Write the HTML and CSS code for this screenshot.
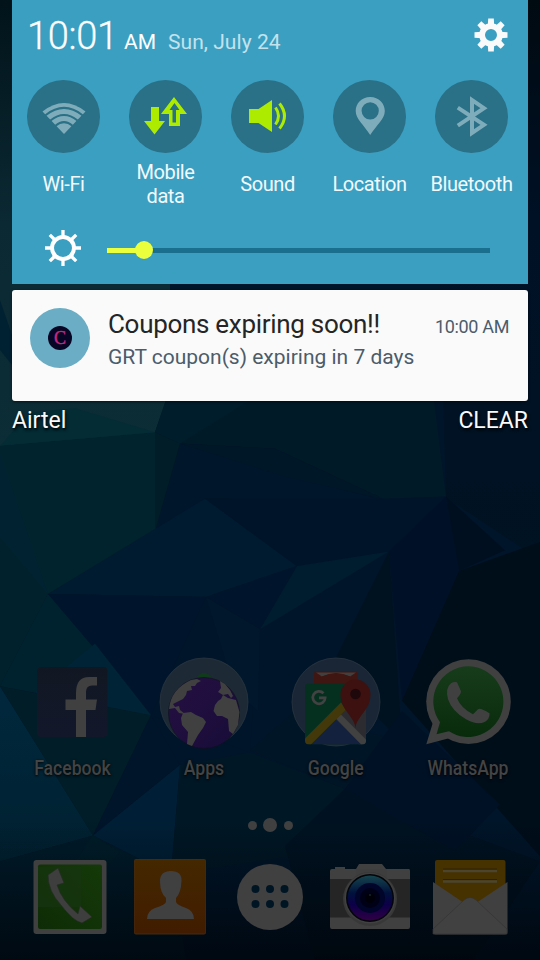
FILE: index.html
```html
<!DOCTYPE html>
<html lang="en">
<head>
<meta charset="utf-8">
<title>Notifications</title>
<link rel="stylesheet" href="styles.css">
</head>
<body>
<div class="phone">
  <svg class="wallpaper" viewBox="0 0 540 960" preserveAspectRatio="none">
    <defs>
      <linearGradient id="lt" x1="0" y1="0" x2="0" y2="1"><stop offset="0" stop-color="#02131a"/><stop offset=".5" stop-color="#0b2933"/><stop offset="1" stop-color="#0b2d36"/></linearGradient>
      <linearGradient id="rt" x1="0" y1="0" x2="0" y2="1"><stop offset="0" stop-color="#000a11"/><stop offset=".4" stop-color="#001126"/><stop offset="1" stop-color="#001322"/></linearGradient>
      <linearGradient id="lb" x1="0" y1="0" x2="0" y2="1"><stop offset="0" stop-color="#00283d"/><stop offset="1" stop-color="#002131"/></linearGradient>
      <linearGradient id="fade" x1="0" y1="0" x2="0" y2="1"><stop offset="0" stop-color="#000409" stop-opacity="0"/><stop offset="1" stop-color="#000409" stop-opacity=".75"/></linearGradient>
    </defs>
    <rect width="540" height="960" fill="#001529"/>
    <path d="M0 0H170V390L155 433L0 446Z" fill="url(#lt)"/>
    <path d="M432 0H540V560L446 498Z" fill="url(#rt)"/>
    <path d="M0 300L12 335V365L0 350Z" fill="#002131"/>
    <g transform="translate(0 -14.8) scale(1 1.037)">
      <path d="M166 400H434L446 493L389 498L275 447L180 442L155 527V431Z" fill="#001a28"/>
      <path d="M166 400H250L180 442L155 431Z" fill="#001d2c"/>
      <path d="M180 442L285 472L389 498L205 495L155 527Z" fill="#00162a"/>
      <path d="M180 442L275 447L385 496L285 474Z" fill="#001728"/>
      <path d="M0 444L155 431V527L48 587L0 587Z" fill="#01232d"/>
      <path d="M0 444L155 431L75 408L30 412Z" fill="#032c35"/>
      <path d="M155 431L180 442L155 527Z" fill="#001d28"/>
      <path d="M0 450L48 587L0 532Z" fill="#012331"/>
      <path d="M0 532L48 587L0 676Z" fill="#01222c"/>
      <path d="M48 587L151 704L0 676Z" fill="#002030"/>
      <path d="M0 676L48 587L95 640L35 682Z" fill="#00222f"/>
      <path d="M48 587L205 495L297 560L206 590Z" fill="#001a2f"/>
      <path d="M205 495H389L446 493L389 546L297 560Z" fill="#001429"/>
      <path d="M48 587L206 590L151 704Z" fill="#00152b"/>
      <path d="M206 590L258 621L250 740L151 704Z" fill="#00152a"/>
      <path d="M206 590L297 560L260 621Z" fill="#00152b"/>
      <path d="M297 560L389 546L260 621Z" fill="#001c2f"/>
      <path d="M206 590L260 621L258 700L235 680Z" fill="#00172c"/>
      <path d="M389 546L402 730L330 660Z" fill="#001220"/>
      <path d="M389 546L446 493L459 565L402 690Z" fill="#001127"/>
      <path d="M459 565L540 537V840L402 690Z" fill="#000e1a"/>
      <path d="M446 493L505 545L459 565Z" fill="#000f20"/>
      <path d="M0 676L93 820L0 845Z" fill="url(#lb)"/>
      <path d="M0 676L151 704L93 820Z" fill="#001d28"/>
      <path d="M35 682L95 635L151 704Z" fill="#002435"/>
      <path d="M151 704L180 752L93 820Z" fill="#00142a"/>
      <path d="M93 820L180 752L171 858Z" fill="#001f36"/>
      <path d="M180 752L250 740L345 775L290 840L171 858Z" fill="#001725"/>
      <path d="M250 738L295 700L402 730L345 775Z" fill="#001526"/>
      <path d="M345 775L540 845L460 960H320L285 830Z" fill="#001221"/>
      <path d="M345 775L455 835L500 790L402 700Z" fill="#001125"/>
      <path d="M0 845L93 820L171 858L190 960H0Z" fill="#001b2a"/>
      <path d="M76 844L93 820L120 836L108 850Z" fill="#001d29"/>
    </g>
    <rect y="820" width="540" height="140" fill="url(#fade)"/>
  </svg>

  <section class="shade">
    <header class="status">
      <span class="clock">10:01</span>
      <span class="ampm">AM</span>
      <span class="date">Sun, July 24</span>
      <svg class="gear" viewBox="-17 -17 34 34">
        <g fill="#fafafa">
          <path id="t" d="M-2.8 -16.5H2.8L3.2 -9H-3.2Z"/>
          <use href="#t" transform="rotate(45)"/><use href="#t" transform="rotate(90)"/><use href="#t" transform="rotate(135)"/><use href="#t" transform="rotate(180)"/><use href="#t" transform="rotate(225)"/><use href="#t" transform="rotate(270)"/><use href="#t" transform="rotate(315)"/>
        </g>
        <circle r="8.9" fill="none" stroke="#fafafa" stroke-width="5.8"/>
      </svg>
    </header>
    <div class="toggles">
      <div class="toggle">
        <svg viewBox="0 0 73 73"><circle cx="36.5" cy="36.5" r="36.5"/><path d="M15.500 31.500Q37 14.500 58.500 31.500L37 54Z" fill="#7facba"/><path d="M18.500 35.200Q37 20.500 55.500 35.200M23.500 40.500Q37 29.500 50.500 40.500M28.500 45.700Q37 38.500 45.500 45.700" fill="none" stroke="#2a7086" stroke-width="2"/></svg>
        <span class="name">Wi-Fi</span>
      </div>
      <div class="toggle">
        <svg viewBox="0 0 73 73"><circle cx="36.500" cy="36.500" r="36.500"/><path d="M22 27H30V41H36L25.500 54.500L15 41H22Z" fill="#adec00"/><path d="M45 17L58 34H51V46H40V34H32Z" fill="#adec00"/><path d="M45.500 23L50.500 30H47V42.500H43.500V30H40.500Z" fill="#2a7086"/></svg>
        <span class="name">Mobile<br>data</span>
      </div>
      <div class="toggle">
        <svg viewBox="0 0 73 73"><circle cx="36.500" cy="36.500" r="36.500"/><path d="M18 29H27.500L41 20V52L27.500 43H18Z" fill="#adec00"/><path d="M44.500 27.500Q50.500 36 44.500 44.500M48.500 23.500Q58.500 36 48.500 48.500" fill="none" stroke="#adec00" stroke-width="3"/></svg>
        <span class="name">Sound</span>
      </div>
      <div class="toggle">
        <svg viewBox="0 0 73 73"><circle cx="36.500" cy="36.500" r="36.500"/><path fill-rule="evenodd" d="M37.200 17C28.500 17 22.700 23.500 22.700 31C22.700 39 31 45 37.200 55C43.500 45 51.800 39 51.800 31C51.800 23.500 46 17 37.200 17ZM37.200 22.200A8.600 8.600 0 1 1 37.200 39.400A8.600 8.600 0 1 1 37.200 22.200Z" fill="#7facba"/></svg>
        <span class="name">Location</span>
      </div>
      <div class="toggle">
        <svg viewBox="0 0 73 73"><circle cx="36.500" cy="36.500" r="36.500"/><path d="M22.800 27.700L49 44.800L37 53V20L49 28.200L22.800 45.700" fill="none" stroke="#7facba" stroke-width="4"/></svg>
        <span class="name">Bluetooth</span>
      </div>
    </div>
    <div class="brightness">
      <svg class="sun" viewBox="-18 -18 36 36"><circle r="11" fill="none" stroke="#fff" stroke-width="4"/><path d="M0 -18V-12M0 18V12M-18 0H-12M18 0H12M-13.200 -13.200L-8.500 -8.500M13.200 13.200L8.500 8.500M13.200 -13.200L8.500 -8.500M-13.200 13.200L-8.500 8.500" stroke="#fff" stroke-width="3.300"/></svg>
      <div class="track"><div class="fill"></div><div class="thumb"></div></div>
    </div>
  </section>

  <article class="card">
    <div class="avatar"><div class="badge">C</div></div>
    <div class="body">
      <div class="line"><span class="title">Coupons expiring soon!!</span><span class="when">10:00 AM</span></div>
      <div class="text">GRT coupon(s) expiring in 7 days</div>
    </div>
  </article>

  <div class="carrier"><span class="operator">Airtel</span><span class="clear">CLEAR</span></div>

  <main class="apps">
    <div class="app">
      <svg viewBox="0 0 90 92"><defs><linearGradient id="fb" x1="0" y1="0" x2="0" y2="1"><stop offset="0" stop-color="#111722"/><stop offset="1" stop-color="#12182a"/></linearGradient></defs><rect x="10" y="10" width="70.500" height="70" rx="4" fill="url(#fb)"/><path d="M49 80V53H38.500V42.500H49V36Q49 20 62 20H70V28.500H65Q59 28.500 59 35V42.500H70L68.500 53H59V80Z" fill="#404040"/></svg>
      <span class="label">Facebook</span>
    </div>
    <div class="app">
      <svg viewBox="0 0 90 92"><defs><linearGradient id="gl" x1="0" y1="0" x2="1" y2="1"><stop offset="0" stop-color="#251043"/><stop offset="1" stop-color="#180c38"/></linearGradient></defs><circle cx="45" cy="45" r="44" fill="#1d2934" stroke="#293640" stroke-width=".8"/><path d="M37 21Q45 11 53 21Z" fill="#103b1b"/><circle cx="45" cy="56" r="35.500" fill="url(#gl)" stroke="#101020" stroke-width=".7"/><g fill="#404040" transform="translate(0 -1)"><path d="M32 24L38 23L42 25L38 27L36 30H32L33 34L28 35L27 39L24 43L18 46L14 48L16 51L20 50L21 54L26 58L20 57L16 52L10 53Q12 33 32 24Z"/><path d="M24 57L32 56L37 59L44 62L47 66L44 72L39 79L33 90L28 88L29 76L23 69L22 62Z"/><path d="M61 25L66 28L71 34L74 40L72 42L69 38L64 39L59 36L62 32Z"/><path d="M56 49L59 45L62 43L64 39L69 42L77 44L80.500 56L79 69L74 78L70 75L69 63L63 60L58 60L54.500 55Z"/></g></svg>
      <span class="label">Apps</span>
    </div>
    <div class="app">
      <svg viewBox="0 0 90 92"><circle cx="45" cy="45" r="44" fill="#1a2635" stroke="#293640" stroke-width=".8"/><g transform="translate(0 -.5)"><path d="M23 17Q23 15 25 15H64Q67 15 67 18V28H23Z" fill="#401612"/><path d="M25 16H65L59 20Q45 14 31 20Z" fill="#404040"/><path d="M31 20Q45 13 59 20V24H31Z" fill="#401612"/><clipPath id="map"><rect x="14" y="27" width="61" height="61" rx="4"/></clipPath><g clip-path="url(#map)"><path d="M14 27H75V88H14Z" fill="#053020"/><path d="M75 37V88H68L43 62Z" fill="#2c2c30"/><path d="M45 62L50 58L75 83V88H70Z" fill="#414141"/><path d="M20 88L45 63L70 88Z" fill="#13213e"/><path d="M14 82L50 46L55 53L20 88H14Z" fill="#433809"/></g><path d="M32.500 36.800A6.200 6.200 0 1 0 34.200 41.300H28" fill="none" stroke="#424242" stroke-width="2.700"/><path d="M64.500 72C64 60 49.500 54 49.500 38A15 15 0 0 1 79.500 38C79.500 54 65 60 64.500 72Z" fill="#3d110f"/><circle cx="64.500" cy="37.500" r="5.300" fill="#1e080b"/></g></svg>
      <span class="label">Google</span>
    </div>
    <div class="app">
      <svg viewBox="0 0 90 92"><defs><linearGradient id="wa" x1="0" y1="0" x2="0" y2="1"><stop offset="0" stop-color="#173c1b"/><stop offset="1" stop-color="#082b0c"/></linearGradient></defs><g transform="translate(0 -.7)"><circle cx="45.500" cy="45.300" r="42.300" fill="#404040"/><path d="M7 60L10 66L3.300 88L26 82L40 84L12 45Z" fill="#404040"/><path d="M45.500 10A35.300 35.300 0 1 1 26 75L13.500 78L17 66A35.300 35.300 0 0 1 45.500 10Z" fill="url(#wa)"/><path d="M28 27Q31 25 34 26L38 35Q38 38 34 42Q38 52 50 58L55 53Q57 51 66.500 57Q67 63 61 66Q54 69 43 63Q29 55 25 43Q22 32 28 27Z" fill="#404040"/></g></svg>
      <span class="label">WhatsApp</span>
    </div>
  </main>

  <nav class="pager"><i></i><i class="current"></i><i></i></nav>

  <footer class="dock">
    <svg viewBox="0 0 80 80"><defs><linearGradient id="gr" x1="1" y1="0" x2="0" y2="1"><stop offset="0" stop-color="#153909"/><stop offset="1" stop-color="#0e2c06"/></linearGradient></defs><rect x="3.500" y="3" width="73" height="74" rx="3" fill="#404040"/><rect x="8" y="7.500" width="64" height="64.500" rx="2" fill="url(#gr)"/><path d="M8 10H51V50H8Z" fill="#183512" opacity=".6"/><path d="M18 18L28 11L34 26L27 28Q32 44 48 57L50 49L62 60L52 66Q43 64 31 48Q18 34 18 18Z" fill="#3e3e3e" stroke="#252b23" stroke-width=".6"/></svg>
    <svg viewBox="0 0 80 80"><defs><linearGradient id="or" x1="0" y1="0" x2="0" y2="1"><stop offset="0" stop-color="#442800"/><stop offset="1" stop-color="#411c00"/></linearGradient></defs><rect x="4" y="2" width="72" height="75.500" rx="2" fill="#442a13"/><rect x="4.500" y="3" width="71" height="73.500" rx="1" fill="url(#or)"/><path d="M17 62Q17 54 25 51Q35 48 36 45V41Q30 36 30 24Q30 14 41 14Q52 14 51.500 24Q51 36 46 41V45Q47 48 56 51Q64 54 64 62Z" fill="#404040"/></svg>
    <svg viewBox="0 0 80 80"><circle cx="40" cy="40" r="33" fill="#404040"/><g fill="#001524"><circle cx="25.500" cy="32" r="4"/><circle cx="40" cy="32" r="4"/><circle cx="54.500" cy="32" r="4"/><circle cx="25.500" cy="47" r="4"/><circle cx="40" cy="47" r="4"/><circle cx="54.500" cy="47" r="4"/></g></svg>
    <svg viewBox="0 0 80 80"><defs><linearGradient id="ln" x1="0" y1="0" x2="0" y2="1"><stop offset="0" stop-color="#16444d"/><stop offset=".4" stop-color="#00113b"/><stop offset=".65" stop-color="#0c0048"/><stop offset="1" stop-color="#300044"/></linearGradient></defs><path d="M2 12H5V10H15V12H26L29 7H52L56 12H79Q80 12 80 14V70Q80 72 78 72H2Q0 72 0 70V14Q0 12 2 12Z" fill="#404040"/><rect y="22" width="80" height="38.500" fill="#252525"/><path d="M26 12H57V24H26Z" fill="#3e3e3e"/><circle cx="40" cy="42" r="27" fill="#383838"/><circle cx="40" cy="41" r="25.500" fill="#404040"/><circle cx="40" cy="41" r="24" fill="#030509"/><circle cx="40" cy="41" r="22.500" fill="url(#ln)"/><circle cx="40" cy="41" r="15" fill="#01052a"/><circle cx="40" cy="41" r="10" fill="#000116"/><circle cx="40" cy="41" r="5" fill="#000009"/><circle cx="40" cy="38" r="1" fill="#15272c"/></svg>
    <svg viewBox="0 0 80 80"><rect x="5" y="3" width="70.500" height="55" rx="2" fill="#463100"/><path d="M13 14H67M13 24.500H67" stroke="#4b442f" stroke-width="2.500"/><path d="M13 12H67M13 22.500H67" stroke="#302200"/><path d="M3 25L40 50L77.500 25V75Q77.500 77.500 75 77.500H5.500Q3 77.500 3 75Z" fill="#404040"/><path d="M3 72L34 43Q40 38 46 43L77 72V77H3Z" fill="#414141" stroke="#343434" stroke-width=".7"/></svg>
  </footer>
</div>
</body>
</html>
```
FILE: styles.css
```css
* { box-sizing: border-box; }
body { margin: 0; background: #001529; font-family: Roboto, "Liberation Sans", sans-serif; }
.phone { position: relative; width: 540px; height: 960px; overflow: hidden; display: flex; flex-direction: column; isolation: isolate; }
.wallpaper { position: absolute; inset: 0; width: 540px; height: 960px; z-index: -1; }

.shade { margin: 0 12px; height: 284px; background: #3b9fc1; color: #fff; }
.status { display: flex; align-items: baseline; height: 80px; padding: 14px 20px 0 15px; line-height: 45px; white-space: nowrap; }
.clock { font-size: 38px; font-weight: 300; width: 97px; letter-spacing: -.3px; -webkit-text-stroke: .3px #fff; }
.ampm { font-size: 21px; width: 44px; }
.date { font-size: 21px; letter-spacing: .05px; color: #c4e2ec; flex: 1; }
.gear { width: 34px; height: 34px; align-self: flex-start; margin-top: 4px; }
.toggles { display: grid; grid-template-columns: repeat(5, 102px); height: 130px; }
.toggle { display: flex; flex-direction: column; align-items: center; }
.toggle svg { width: 73px; height: 73px; flex: none; }
.toggle circle { fill: #2a7086; }
.name { height: 60px; padding: 1px 0 0 1px; display: flex; align-items: center; text-align: center; font-size: 20px; letter-spacing: -.4px; line-height: 24px; color: #f3f9fb; white-space: nowrap; }
.brightness { display: flex; align-items: center; height: 74px; padding: 3px 38px 0 33px; }
.sun { width: 36px; height: 36px; margin-bottom: 2px; flex: none; }
.track { position: relative; flex: 1; height: 5px; margin: 3px 0 0 26px; background: #1a6f8f; }
.fill { width: 37px; height: 5px; background: #ecff3d; }
.thumb { position: absolute; left: 28px; top: -7px; width: 18px; height: 18px; border-radius: 50%; background: #ecff3d; }

.card { margin: 6px 12px 0; height: 111px; border-radius: 3px; background: #fafafa; padding: 18px 19px 0 18px; display: flex; gap: 18px; box-shadow: 0 1px 3px #0008; }
.avatar { width: 60px; height: 60px; border-radius: 50%; background: #6aadc4; display: flex; align-items: center; justify-content: center; }
.badge { width: 24px; height: 24px; border-radius: 50%; background: #080625; color: #c92682; font: 18px/24px "Liberation Serif", serif; -webkit-text-stroke: .4px #c92682; text-align: center; }
.body { flex: 1; white-space: nowrap; }
.line { display: flex; justify-content: space-between; align-items: baseline; line-height: 32px; }
.title { font-size: 26px; letter-spacing: -.3px; color: #252525; }
.when { font-size: 18px; letter-spacing: -.35px; color: #4b5c6b; }
.text { font-size: 21px; line-height: 30px; margin-top: -1px; color: #4b5c6b; }

.carrier { display: flex; justify-content: space-between; margin: 0 12px; height: 38px; font-size: 23px; line-height: 39px; color: #fafafa; text-shadow: 1px 2px 3px #000; }

.apps { display: grid; grid-template-columns: repeat(4, 132px); margin: 218px 6px 0; }
.app { display: flex; flex-direction: column; align-items: center; }
.app svg { width: 90px; height: 92px; }
.label { font-size: 20px; font-weight: 500; line-height: 24px; margin-top: 7px; color: #444; transform: scaleX(.88); text-shadow: 0 1px 3px #000; }

.pager { display: flex; justify-content: center; align-items: center; gap: 6.5px; height: 14px; margin-top: 38px; }
.pager i { width: 9px; height: 9px; border-radius: 50%; background: #404040; }
.pager .current { width: 14px; height: 14px; }
.dock { display: grid; grid-template-columns: repeat(5, 100px); justify-items: center; margin: 25px 20px 0; }
.dock svg { width: 80px; height: 80px; }
```
